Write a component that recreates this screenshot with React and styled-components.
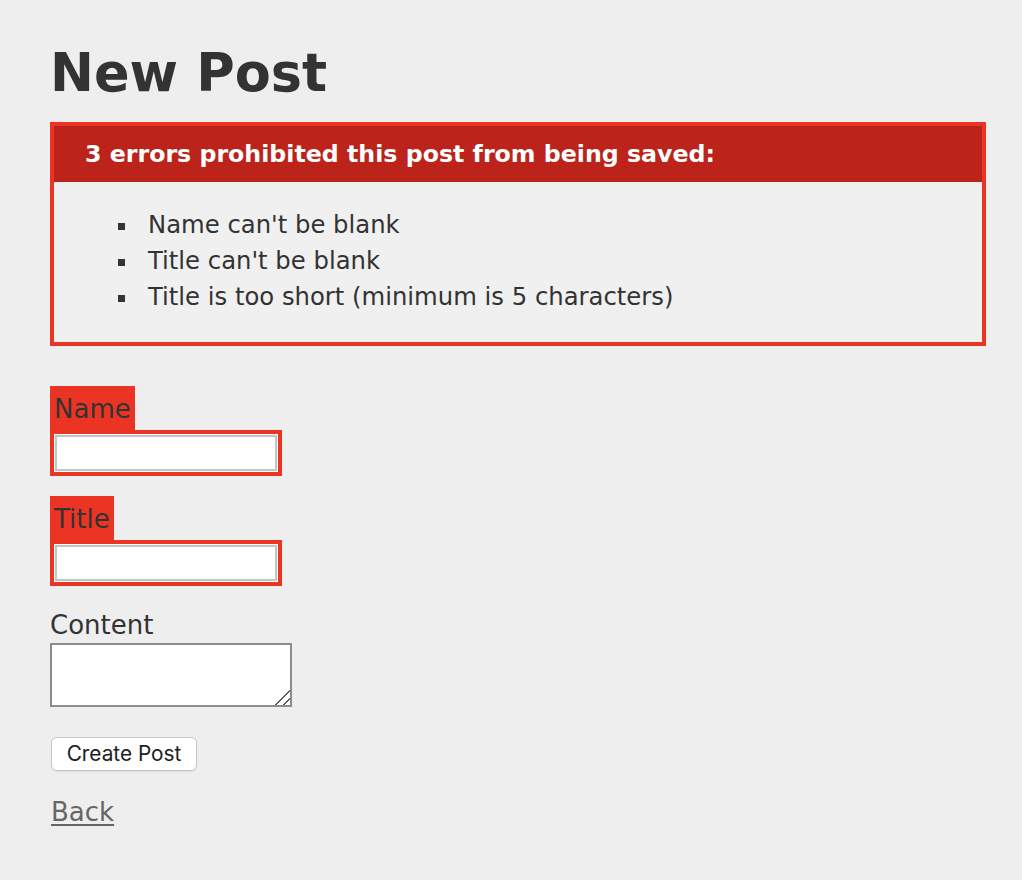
import React from "react";
import styled, { createGlobalStyle } from "styled-components";

const Global = createGlobalStyle`
  html, body { margin: 0; padding: 0; background: #eeeeee; }
  body {
    color: #333333;
    font-family: "DejaVu Sans", Verdana, sans-serif;
    font-size: 26px;
    line-height: 36px;
  }
`;

const Page = styled.div`
  display: flex;
  flex-direction: column;
  align-items: flex-start;
  padding: 42px 36px 40px 50px;
`;

const Heading = styled.h1`
  margin: 0;
  font-size: 52.5px;
  line-height: 62px;
  font-weight: bold;
  color: #333333;
`;

const ErrorBox = styled.div`
  align-self: stretch;
  margin-top: 18px;
  border: 4px solid #ec3424;
  background: #f0f0f0;
  padding-bottom: 27px;
`;

const ErrorTitle = styled.h2`
  margin: 0;
  height: 56px;
  padding-left: 31px;
  background: #bc231a;
  color: #ffffff;
  font-size: 23.7px;
  line-height: 56px;
  font-weight: bold;
`;

const ErrorList = styled.ul`
  list-style: none;
  margin: 25px 0 0;
  padding: 0 0 0 64px;
`;

const ErrorItem = styled.li`
  display: flex;
  align-items: center;
  font-size: 24.3px;
  line-height: 36px;
  &::before {
    content: "";
    flex: none;
    width: 7px;
    height: 7px;
    margin: 2px 23px 0 0;
    background: #333333;
  }
`;

const Field = styled.div`
  display: flex;
  flex-direction: column;
  align-items: flex-start;
  margin-top: ${(p) => p.$top}px;
`;

const ErrorLabel = styled.label`
  display: block;
  background: #ec3424;
  padding: 5px 4px 3px 4px;
  line-height: 36px;
`;

const PlainLabel = styled.label`
  display: block;
  line-height: 36px;
`;

const ErrorWrap = styled.div`
  background: #ec3424;
  padding: 4px;
  display: flex;
`;

const TextInput = styled.input`
  box-sizing: border-box;
  width: 224px;
  height: 38px;
  margin: 0;
  border: 1px solid #ffffff;
  box-shadow: inset 0 0 0 2px #c4c4c4;
  background: #ffffff;
  outline: none;
`;

const TextArea = styled.textarea`
  box-sizing: border-box;
  width: 242px;
  height: 64px;
  margin: 0;
  border: 2px solid #8c8c8c;
  background: #ffffff;
  outline: none;
  &::-webkit-resizer {
    width: 16px;
    height: 16px;
    background: linear-gradient(
      135deg,
      transparent 0 47%,
      #5a5a5a 47% 56%,
      transparent 56% 74%,
      #5a5a5a 74% 83%,
      transparent 83%
    );
  }
`;

const Button = styled.button`
  margin: 30px 0 0 1px;
  box-sizing: border-box;
  width: 146px;
  height: 34px;
  padding: 0;
  border: 1px solid #c6c6c6;
  border-radius: 6px;
  background: #ffffff;
  box-shadow: 0 1px 1px rgba(0, 0, 0, 0.08);
  color: #1d1d1d;
  font-family: Inter, "Liberation Sans", sans-serif;
  font-size: 20.8px;
  line-height: 32px;
`;

const BackLink = styled.a`
  margin: 23px 0 0 1px;
  color: #666666;
  text-decoration: underline;
  text-underline-offset: 3px;
`;

export default function App() {
  return (
    <>
      <Global />
      <Page>
        <Heading>New Post</Heading>
        <ErrorBox>
          <ErrorTitle>3 errors prohibited this post from being saved:</ErrorTitle>
          <ErrorList>
            <ErrorItem>Name can't be blank</ErrorItem>
            <ErrorItem>Title can't be blank</ErrorItem>
            <ErrorItem>Title is too short (minimum is 5 characters)</ErrorItem>
          </ErrorList>
        </ErrorBox>
        <Field $top={40}>
          <ErrorLabel htmlFor="post_name">Name</ErrorLabel>
          <ErrorWrap>
            <TextInput id="post_name" type="text" />
          </ErrorWrap>
        </Field>
        <Field $top={20}>
          <ErrorLabel htmlFor="post_title">Title</ErrorLabel>
          <ErrorWrap>
            <TextInput id="post_title" type="text" />
          </ErrorWrap>
        </Field>
        <Field $top={21}>
          <PlainLabel htmlFor="post_content">Content</PlainLabel>
          <TextArea id="post_content" />
        </Field>
        <Button type="button">Create Post</Button>
        <BackLink href="#">Back</BackLink>
      </Page>
    </>
  );
}
